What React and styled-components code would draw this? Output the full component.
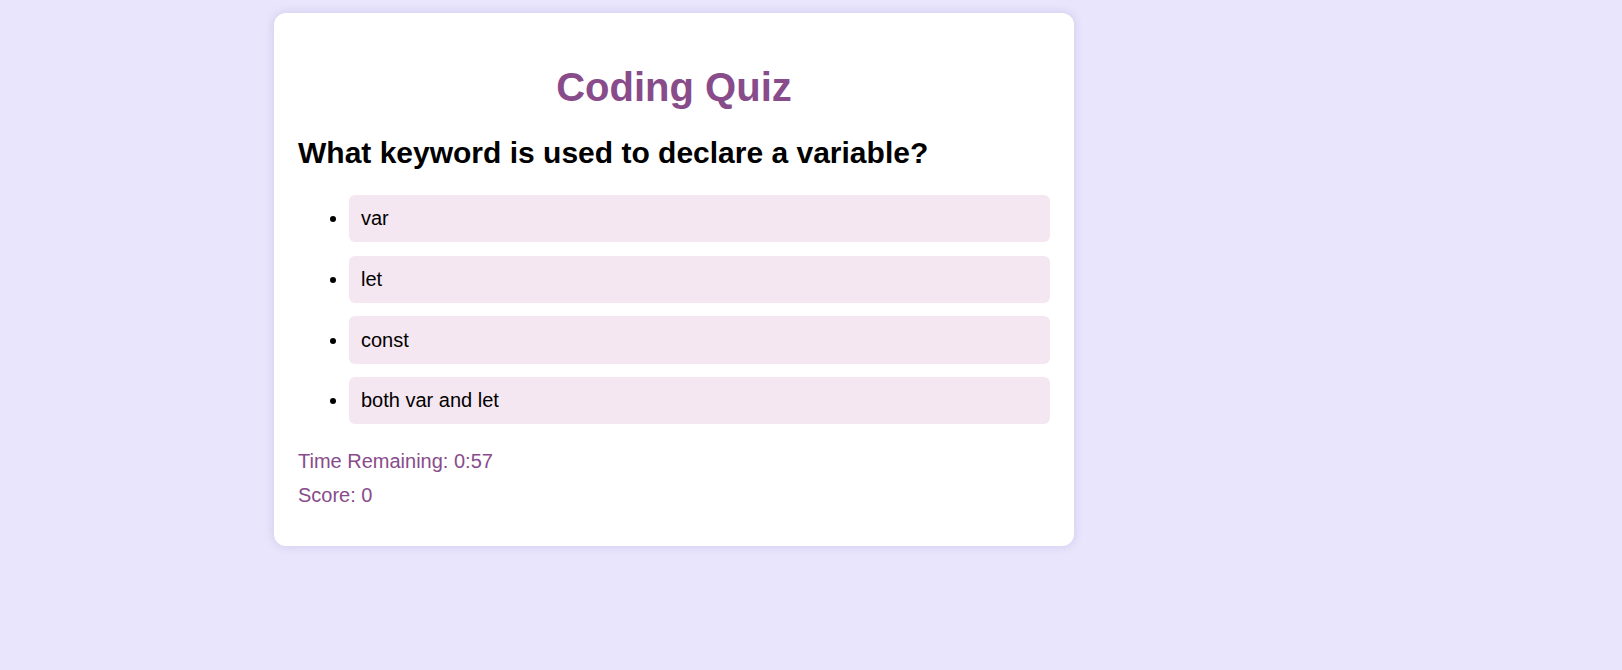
import React from "react";
import styled, { createGlobalStyle } from "styled-components";

const GlobalStyle = createGlobalStyle`
  html, body {
    margin: 0;
    padding: 0;
  }
  body {
    background: #e9e5fc;
    font-family: "Liberation Sans", Arial, sans-serif;
    min-height: 670px;
  }
`;

const Page = styled.div`
  padding: 13px 0 0 274px;
`;

const Card = styled.div`
  width: 800px;
  box-sizing: border-box;
  background: #ffffff;
  border-radius: 12px;
  box-shadow: 0 0 10px rgba(120, 100, 170, 0.22);
  padding: 24px;
  display: flex;
  flex-direction: column;
`;

const Title = styled.h1`
  margin: 26.8px 0 0;
  font-size: 40px;
  font-weight: 700;
  color: #884c8b;
  text-align: center;
  line-height: 46px;
`;

const Question = styled.h2`
  margin: 26.7px 0 0;
  font-size: 30px;
  font-weight: 700;
  color: #000;
  line-height: 34.5px;
`;

const Options = styled.ul`
  margin: 24px 0 0;
  padding: 0 0 0 51px;
  list-style: disc;
`;

const Option = styled.li`
  font-size: 20px;
  line-height: 23px;
  color: #000;
  background: #f5e7f1;
  border-radius: 6px;
  padding: 12.2px 12px;
  margin-bottom: 13.3px;
  &:last-child {
    margin-bottom: 0;
  }
`;

const Stat = styled.p`
  margin: ${(p) => (p.$first ? "25.7px" : "11px")} 0 0;
  font-size: 20px;
  line-height: 23px;
  color: #884c8b;
`;

const Spacer = styled.div`
  height: 15px;
`;

const answers = ["var", "let", "const", "both var and let"];

export default function App() {
  return (
    <>
      <GlobalStyle />
      <Page>
        <Card>
          <Title>Coding Quiz</Title>
          <Question>What keyword is used to declare a variable?</Question>
          <Options>
            {answers.map((a) => (
              <Option key={a}>{a}</Option>
            ))}
          </Options>
          <Stat $first>Time Remaining: 0:57</Stat>
          <Stat>Score: 0</Stat>
          <Spacer />
        </Card>
      </Page>
    </>
  );
}
